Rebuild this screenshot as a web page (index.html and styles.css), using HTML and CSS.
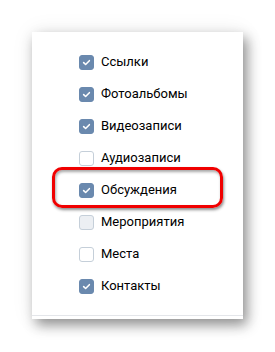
FILE: index.html
```html
<!DOCTYPE html>
<html lang="ru">
<head>
<meta charset="utf-8">
<link rel="stylesheet" href="styles.css">
</head>
<body>
<div class="card">
  <ul class="list">
    <li class="row"><span class="cb on"><svg viewBox="0 0 15 15"><path d="M4.2 7.6 6.5 9.8 10.8 5.4"/></svg></span><span class="lbl">Ссылки</span></li>
    <li class="row"><span class="cb on"><svg viewBox="0 0 15 15"><path d="M4.2 7.6 6.5 9.8 10.8 5.4"/></svg></span><span class="lbl">Фотоальбомы</span></li>
    <li class="row"><span class="cb on"><svg viewBox="0 0 15 15"><path d="M4.2 7.6 6.5 9.8 10.8 5.4"/></svg></span><span class="lbl">Видеозаписи</span></li>
    <li class="row"><span class="cb"></span><span class="lbl">Аудиозаписи</span></li>
    <li class="row"><span class="cb on"><svg viewBox="0 0 15 15"><path d="M4.2 7.6 6.5 9.8 10.8 5.4"/></svg></span><span class="lbl">Обсуждения</span></li>
    <li class="row"><span class="cb hover"></span><span class="lbl">Мероприятия</span></li>
    <li class="row"><span class="cb"></span><span class="lbl">Места</span></li>
    <li class="row"><span class="cb on"><svg viewBox="0 0 15 15"><path d="M4.2 7.6 6.5 9.8 10.8 5.4"/></svg></span><span class="lbl">Контакты</span></li>
  </ul>
  <div class="foot"></div>
  <div class="mark"></div>
</div>
</body>
</html>
```

FILE: styles.css
```css
html, body {
  margin: 0;
  padding: 0;
  background: #ffffff;
}
body {
  width: 275px;
  height: 352px;
  overflow: hidden;
  font-family: Roboto, "Liberation Sans", Arial, sans-serif;
}
.card {
  position: relative;
  margin: 32px 0 0 32px;
  width: 211px;
  height: 287px;
  background: #fff;
  box-shadow: 4px 6px 12px rgba(0, 0, 0, 0.42), 0 0 22px rgba(0, 0, 0, 0.07);
  display: flex;
  flex-direction: column;
}
.list {
  list-style: none;
  margin: 0;
  padding: 14px 0 0 47px;
}
.row {
  height: 32px;
  display: flex;
  align-items: center;
  gap: 7px;
  font-size: 13px;
  color: #000;
}
.cb {
  width: 15px;
  height: 15px;
  box-sizing: border-box;
  border: 1px solid #c5cfd9;
  border-radius: 3px;
  background: #fff;
  display: flex;
  flex: none;
}
.cb.hover {
  background: #eceff3;
}
.cb.on {
  background: #6a89ae;
  border-color: #6a89ae;
}
.cb svg {
  width: 13px;
  height: 13px;
  fill: none;
  stroke: #fff;
  stroke-width: 1.8;
  stroke-linecap: round;
  stroke-linejoin: round;
}
.lbl {
  line-height: 16px;
}
.foot {
  margin-top: auto;
  margin-bottom: 3px;
  height: 1px;
  background: #e4e6ea;
}
.mark {
  position: absolute;
  left: 20px;
  top: 135px;
  width: 171px;
  height: 41px;
  box-sizing: border-box;
  border: 3px solid #f00000;
  border-radius: 10px;
  box-shadow: 1px 2px 3px rgba(0, 0, 0, 0.45), inset 1px 2px 3px rgba(0, 0, 0, 0.35);
}
```
